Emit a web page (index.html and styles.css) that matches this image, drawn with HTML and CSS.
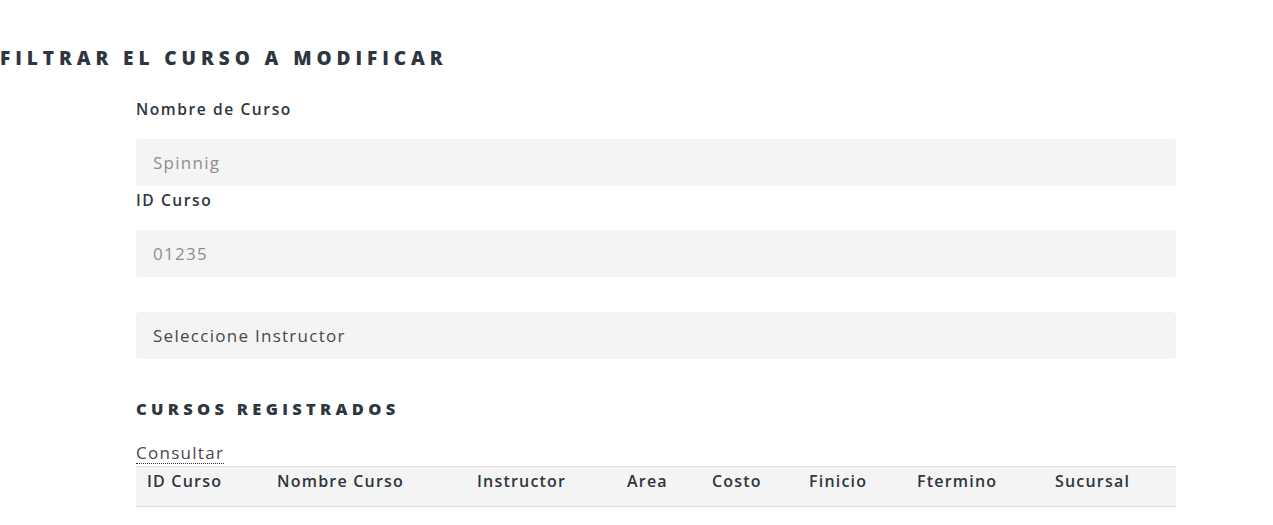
FILE: index.html
```html
<!DOCTYPE html>
<html lang="es">
<head>
<meta charset="utf-8">
<title>Filtrar curso</title>
<link rel="stylesheet" href="styles.css">
</head>
<body>
<section class="page">
  <h2 class="title">Filtrar el curso a modificar</h2>
  <form class="form">
    <label class="label">Nombre de Curso</label>
    <input class="field" type="text" placeholder="Spinnig">
    <label class="label">ID Curso</label>
    <input class="field" type="text" placeholder="01235">
    <div class="spacer"></div>
    <div class="field select">Seleccione Instructor</div>
    <h3 class="subtitle">Cursos registrados</h3>
    <a class="link" href="#">Consultar</a>
    <table class="table">
      <thead>
        <tr>
          <th class="c1">ID Curso</th>
          <th class="c2">Nombre Curso</th>
          <th class="c3">Instructor</th>
          <th class="c4">Area</th>
          <th class="c5">Costo</th>
          <th class="c6">Finicio</th>
          <th class="c7">Ftermino</th>
          <th class="c8">Sucursal</th>
        </tr>
      </thead>
    </table>
  </form>
</section>
</body>
</html>
```
FILE: styles.css
```css
* { box-sizing: border-box; }
html, body { margin: 0; padding: 0; background: #fff; }
body {
  font-family: "Open Sans", "Noto Sans", sans-serif;
  color: #2e3640;
}
.page { padding-top: 45px; }
.title {
  margin: 0;
  font-size: 19px;
  font-weight: 800;
  letter-spacing: 0.26em;
  text-transform: uppercase;
  line-height: 26px;
  color: #2e3640;
}
.form {
  width: 1040px;
  margin: 0 0 0 136px;
  display: flex;
  flex-direction: column;
  align-items: flex-start;
  padding-top: 25px;
}
.label {
  font-size: 15.6px;
  font-weight: 600;
  letter-spacing: 0.1em;
  line-height: 26px;
  margin-bottom: 17px;
}
.field {
  width: 100%;
  height: 47px;
  border: none;
  border-radius: 4px;
  background: #f4f4f4;
  padding: 0 17px;
  font-family: "Open Sans", "Noto Sans", sans-serif;
  font-size: 17px;
  letter-spacing: 0.075em;
  color: #4a4650;
  outline: none;
  margin-bottom: 1px;
}
.field::placeholder { color: #928a92; }
.spacer { height: 34px; }
.select {
  display: flex;
  align-items: center;
  color: #4b4650;
}
.subtitle {
  margin: 36px 0 0;
  font-size: 16.5px;
  font-weight: 800;
  letter-spacing: 0.26em;
  text-transform: uppercase;
  line-height: 26px;
}
.link {
  margin-top: 21px;
  font-size: 17px;
  letter-spacing: 0.075em;
  line-height: 20px;
  color: #4b4650;
  text-decoration: none;
  border-bottom: 1px dotted #2e3640;
}
.table {
  width: 100%;
  border-collapse: collapse;
  table-layout: fixed;
  margin-top: 2px;
}
.table th {
  text-align: left;
  font-size: 16px;
  font-weight: 600;
  letter-spacing: 0.075em;
  background: #f4f4f4;
  border-top: 1px solid #dedede;
  border-bottom: 1px solid #dedede;
  padding: 2px 11px 13px;
  height: 40px;
  vertical-align: top;
  line-height: 24px;
  color: #2e3640;
}
.c1 { width: 130px; }
.c2 { width: 200px; }
.c3 { width: 150px; }
.c4 { width: 85px; }
.c5 { width: 97px; }
.c6 { width: 108px; }
.c7 { width: 138px; }
.c8 { width: 132px; }
```
